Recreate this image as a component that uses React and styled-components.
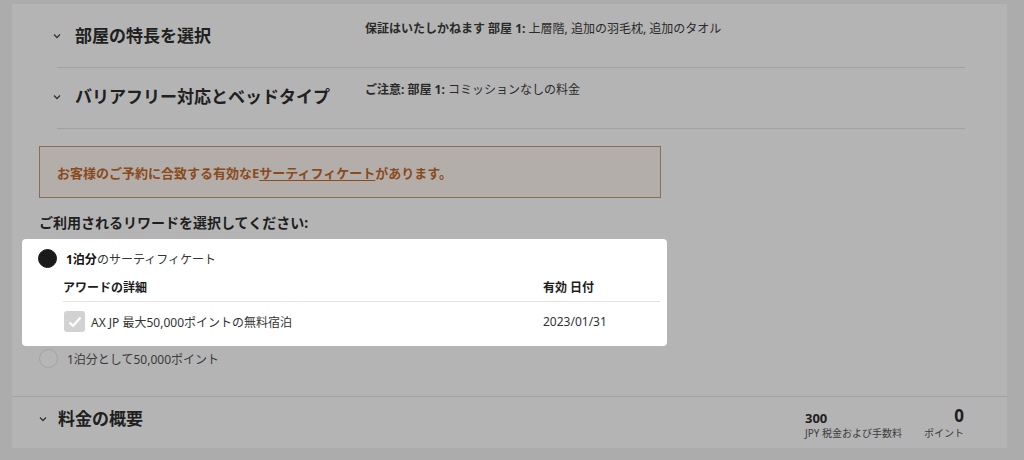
import React from "react";
import styled, {createGlobalStyle} from "styled-components";

const GlobalStyle = createGlobalStyle`
  body {
    margin: 0;
    background: #acacac;
    font-family: "Noto Sans", "Noto Sans CJK JP", sans-serif;
    color: #1e1e1e;
  }
`;

const Panel = styled.div`
  margin: 4px 17px 0 12px;
  height: 444px;
  background: #b4b4b4;
  box-sizing: border-box;
  display: flex;
  flex-direction: column;
`;

const Accordion = styled.div`
  margin: 0 42px 0 45px;
  height: ${p => p.h}px;
  box-sizing: border-box;
  border-bottom: 1px solid #a1a1a1;
  display: grid;
  grid-template-columns: 308px 1fr;
  align-items: start;
  padding-top: ${p => p.top}px;
`;

const Title = styled.div`
  display: flex;
  align-items: center;
  gap: 13px;
  margin-left: -5px;
  margin-top: 1px;
  height: 26px;
  font-size: 17px;
  font-weight: 700;
  color: #202020;
`;

const Chevron = styled.svg`
  width: 10px;
  height: 10px;
  margin-top: 4px;
  flex: none;
`;

const Note = styled.div`
  font-size: 12px;
  line-height: 18px;
  color: #2a2a2a;
  b { font-weight: 700; }
`;

const Body = styled.div`
  padding: 17px 0 0 27px;
  flex: 1;
`;

const Notice = styled.div`
  width: 622px;
  height: 52px;
  box-sizing: border-box;
  border: 1px solid #8a6d55;
  background: #b3aea9;
  display: flex;
  align-items: center;
  padding-left: 17px;
  font-size: 13px;
  font-weight: 700;
  color: #8a4a1c;
  u { text-decoration-thickness: 1px; text-underline-offset: 2px; }
`;

const Heading = styled.div`
  margin-top: 15px;
  font-size: 14px;
  font-weight: 700;
  line-height: 20px;
  color: #1e1e1e;
`;

const Card = styled.div`
  margin: 6px 0 0 -17px;
  width: 645px;
  height: 107px;
  box-sizing: border-box;
  background: #fff;
  border-radius: 4px;
  padding: 10px 7px 0 16px;
`;

const RadioRow = styled.div`
  display: flex;
  align-items: center;
  gap: 9px;
  height: 19px;
  font-size: 12px;
  color: ${p => (p.dim ? "#3a3a3a" : "#333")};
  b { font-weight: 700; color: #111; }
`;

const Radio = styled.span`
  width: 19px;
  height: 19px;
  border-radius: 50%;
  box-sizing: border-box;
  flex: none;
  background: ${p => (p.on ? "#1a1a1a" : "#b6b6b6")};
  border: 1px solid ${p => (p.on ? "#1a1a1a" : "#a3a3a3")};
`;

const Table = styled.div`
  margin: 4px 0 0 25px;
`;

const Row = styled.div`
  display: grid;
  grid-template-columns: 480px 1fr;
  align-items: center;
  height: ${p => p.h}px;
  box-sizing: border-box;
  border-bottom: ${p => (p.line ? "1px solid #e3e3e3" : "none")};
  font-size: 12px;
  font-weight: ${p => (p.head ? 700 : 400)};
  color: ${p => (p.head ? "#1c1c1c" : "#333")};
`;

const Cell = styled.div`
  display: flex;
  align-items: center;
  gap: 6px;
`;

const Check = styled.span`
  width: 21px;
  height: 21px;
  border-radius: 3px;
  background: #d2d2d2;
  display: flex;
  align-items: center;
  justify-content: center;
  margin-left: 1px;
`;

const Alt = styled.div`
  margin: 3px 0 0 0;
`;

const Summary = styled.div`
  border-top: 1px solid #a1a1a1;
  height: 52px;
  box-sizing: border-box;
  display: flex;
  align-items: flex-start;
  padding: 7px 43px 0 26px;
`;

const SummaryTitle = styled(Title)`
  margin: 0;
  gap: 10px;
  flex: 1;
`;

const Figures = styled.div`
  display: flex;
  gap: 22px;
  align-items: flex-end;
  margin-top: 1px;
`;

const Figure = styled.div`
  display: flex;
  flex-direction: column;
  align-items: ${p => (p.right ? "flex-end" : "flex-start")};
`;

const Amount = styled.span`
  font-size: ${p => p.size}px;
  font-weight: 700;
  line-height: ${p => (p.size > 14 ? 21 : 16)}px;
  color: #1e1e1e;
`;

const Unit = styled.span`
  font-size: 10px;
  line-height: 14px;
  color: #3c3c3c;
`;

const ChevronIcon = () => (
  <Chevron viewBox="0 0 10 10">
    <path d="M2 3.5 L5 6.5 L8 3.5" fill="none" stroke="#333" strokeWidth="1.3"/>
  </Chevron>
);

const App = () => {
  return (
    <>
      <GlobalStyle/>
      <Panel>
        <Accordion h={64} top={16}>
          <Title><ChevronIcon/>部屋の特長を選択</Title>
          <Note><b>保証はいたしかねます 部屋 1:</b> 上層階, 追加の羽毛枕, 追加のタオル</Note>
        </Accordion>
        <Accordion h={61} top={13}>
          <Title><ChevronIcon/>バリアフリー対応とベッドタイプ</Title>
          <Note><b>ご注意: 部屋 1:</b> コミッションなしの料金</Note>
        </Accordion>
        <Body>
          <Notice>お客様のご予約に合致する有効なE<u>サーティフィケート</u>があります。</Notice>
          <Heading>ご利用されるリワードを選択してください:</Heading>
          <Card>
            <RadioRow>
              <Radio on/>
              <span><b>1泊分</b>のサーティフィケート</span>
            </RadioRow>
            <Table>
              <Row head line h={30}>
                <div>アワードの詳細</div>
                <div>有効 日付</div>
              </Row>
              <Row h={39}>
                <Cell>
                  <Check>
                    <svg width="14" height="12" viewBox="0 0 14 12">
                      <path d="M1.5 6.5 L5 10 L12.5 1.5" fill="none" stroke="#fff" strokeWidth="2.2"/>
                    </svg>
                  </Check>
                  AX JP 最大50,000ポイントの無料宿泊
                </Cell>
                <div>2023/01/31</div>
              </Row>
            </Table>
          </Card>
          <Alt>
            <RadioRow dim>
              <Radio/>
              <span>1泊分として50,000ポイント</span>
            </RadioRow>
          </Alt>
        </Body>
        <Summary>
          <SummaryTitle><ChevronIcon/>料金の概要</SummaryTitle>
          <Figures>
            <Figure>
              <Amount size={13}>300</Amount>
              <Unit>JPY 税金および手数料</Unit>
            </Figure>
            <Figure right>
              <Amount size={17}>0</Amount>
              <Unit>ポイント</Unit>
            </Figure>
          </Figures>
        </Summary>
      </Panel>
    </>
  );
};

export default App;
